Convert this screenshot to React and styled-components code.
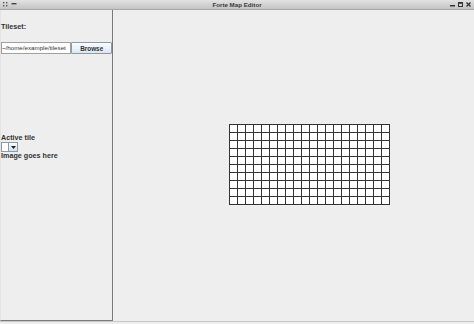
import React from "react";
import styled, { createGlobalStyle } from "styled-components";

const Global = createGlobalStyle`
  html, body { margin: 0; padding: 0; background: #eeeeee; }
  body { font-family: "Liberation Sans", "DejaVu Sans", sans-serif; }
  * { box-sizing: border-box; }
`;

const Window = styled.div`
  width: 474px;
  height: 324px;
  display: flex;
  flex-direction: column;
  background: #eeeeee;
  overflow: hidden;
`;

const TitleBar = styled.div`
  height: 10px;
  flex: none;
  display: flex;
  align-items: center;
  justify-content: space-between;
  padding: 0 3px;
  background: linear-gradient(#e2e2e2, #c4c4c4);
  border-bottom: 1px solid #a8a8a8;
  position: relative;
`;

const Title = styled.div`
  position: absolute;
  left: 0;
  right: 0;
  text-align: center;
  font: bold 6.2px "Liberation Sans", sans-serif;
  color: #3a3a3a;
  line-height: 9px;
`;

const Controls = styled.div`
  display: flex;
  gap: 3px;
  align-items: center;
`;

const Main = styled.div`
  flex: 1;
  display: flex;
  min-height: 0;
  border-bottom: 1px solid #c8c8c8;
  margin-bottom: 2px;
`;

const SidePanel = styled.div`
  width: 113px;
  flex: none;
  display: flex;
  flex-direction: column;
  border-right: 1px solid #7a7a7a;
  border-bottom: 1px solid #7a7a7a;
  border-left: 1px solid #e4e4e4;
  padding-top: 13px;
`;

const Label = styled.div`
  font: bold 7.2px "Liberation Sans", sans-serif;
  color: #333;
  line-height: 8px;
  white-space: nowrap;
  margin-top: ${(p) => p.$top || 0}px;
`;

const Row = styled.div`
  display: flex;
  align-items: stretch;
  height: 12px;
  margin-top: ${(p) => p.$top || 0}px;
`;

const TextField = styled.div`
  width: 71px;
  background: #fff;
  border: 1px solid #a0a0a0;
  font: 6.2px "Liberation Sans", sans-serif;
  color: #333;
  line-height: 10px;
  white-space: nowrap;
  overflow: hidden;
`;

const Button = styled.div`
  width: 41px;
  border: 1px solid #8c9aa8;
  border-radius: 1px;
  background: linear-gradient(#fbfdff, #dbe6f1);
  font: bold 6.4px "Liberation Sans", sans-serif;
  color: #333;
  display: flex;
  align-items: center;
  justify-content: center;
`;

const Combo = styled.div`
  display: flex;
  width: 17px;
  height: 10px;
  border: 1px solid #8c9aa8;
  background: #fff;
`;

const ComboField = styled.div`
  width: 6px;
  background: #fff;
`;

const ComboButton = styled.div`
  flex: 1;
  border-left: 1px solid #8c9aa8;
  background: linear-gradient(#fbfdff, #d6e1ec);
  display: flex;
  align-items: center;
  justify-content: center;
`;

const Canvas = styled.div`
  flex: 1;
  display: flex;
  align-items: center;
  padding-left: 116px;
  padding-bottom: 2px;
`;

const Grid = styled.div`
  width: 161px;
  height: 81px;
  display: grid;
  grid-template-columns: repeat(20, 8px);
  grid-template-rows: repeat(10, 8px);
  border-right: 1px solid #333;
  border-bottom: 1px solid #333;
  background: #fff;
`;

const Cell = styled.div`
  border-left: 1px solid #333;
  border-top: 1px solid #333;
`;

export default function App() {
  return (
    <>
      <Global />
      <Window>
        <TitleBar>
          <Controls>
            <svg width="5" height="5" viewBox="0 0 5 5">
              <rect x="0" y="0" width="1.4" height="1.4" fill="#555" />
              <rect x="3" y="0" width="1.4" height="1.4" fill="#555" />
              <rect x="0" y="3" width="1.4" height="1.4" fill="#555" />
              <rect x="3" y="3" width="1.4" height="1.4" fill="#555" />
            </svg>
            <svg width="6" height="5" viewBox="0 0 6 5">
              <rect x="0.5" y="1" width="5" height="1.4" fill="#444" />
            </svg>
          </Controls>
          <Title>Forte Map Editor</Title>
          <Controls>
            <svg width="5" height="5" viewBox="0 0 5 5">
              <rect x="0" y="3" width="5" height="1.5" fill="#333" />
            </svg>
            <svg width="5" height="5" viewBox="0 0 5 5">
              <rect x="0.5" y="0.5" width="4" height="4" fill="none" stroke="#333" strokeWidth="1" />
              <rect x="0.5" y="0.5" width="4" height="1.3" fill="#333" />
            </svg>
            <svg width="5" height="5" viewBox="0 0 5 5">
              <path d="M0.5 0.5 L4.5 4.5 M4.5 0.5 L0.5 4.5" stroke="#333" strokeWidth="1.3" />
            </svg>
          </Controls>
        </TitleBar>
        <Main>
          <SidePanel>
            <Label>Tileset:</Label>
            <Row $top={11}>
              <TextField>~/home/example/tileset</TextField>
              <Button>Browse</Button>
            </Row>
            <Label $top={80}>Active tile</Label>
            <Combo>
              <ComboField />
              <ComboButton>
                <svg width="5" height="3" viewBox="0 0 5 3">
                  <path d="M0 0 L5 0 L2.5 3 Z" fill="#222" />
                </svg>
              </ComboButton>
            </Combo>
            <Label>Image goes here</Label>
          </SidePanel>
          <Canvas>
            <Grid>
              {Array.from({ length: 200 }, (_, i) => (
                <Cell key={i} />
              ))}
            </Grid>
          </Canvas>
        </Main>
      </Window>
    </>
  );
}
